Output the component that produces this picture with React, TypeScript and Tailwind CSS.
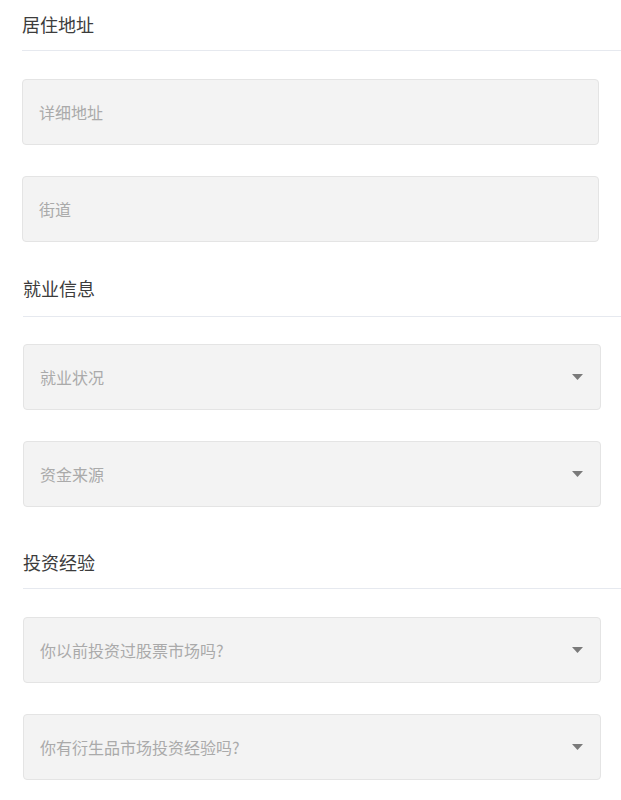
import React from "react";

const font = { fontFamily: '"Noto Sans CJK SC", "Noto Sans", sans-serif' };

function Field({ text, select }: { text: string; select?: boolean }) {
  return (
    <div className="flex h-[66px] items-center justify-between rounded-[4px] border border-[#e4e4e4] bg-[#f3f3f3] pl-[16px] pr-[17px]">
      <span className="text-[16px] leading-6 text-[#aaaaaa]">{text}</span>
      {select && (
        <svg width="11" height="6" viewBox="0 0 11 6" className="shrink-0">
          <path d="M0 0 L11 0 L5.5 6 Z" fill="#7a7a7a" />
        </svg>
      )}
    </div>
  );
}

export default function App() {
  return (
    <div className="min-h-[800px] w-[621px] bg-white" style={font}>
      {/* 居住地址 */}
      <section className="ml-[22px]">
        <h2 className="border-b border-[#e6e9ef] pt-[12px] pb-[14px] text-[18px] font-normal leading-6 text-[#3c3c3c]">
          居住地址
        </h2>
        <div className="mt-[28px] mr-[22px] flex flex-col gap-[31px]">
          <Field text="详细地址" />
          <Field text="街道" />
        </div>
      </section>

      {/* 就业信息 */}
      <section className="ml-[23px] mt-[34px]">
        <h2 className="border-b border-[#e6e9ef] pb-[16px] text-[18px] font-normal leading-6 text-[#3c3c3c]">
          就业信息
        </h2>
        <div className="mt-[27px] mr-[20px] flex flex-col gap-[31px]">
          <Field text="就业状况" select />
          <Field text="资金来源" select />
        </div>
      </section>

      {/* 投资经验 */}
      <section className="ml-[23px] mt-[43px]">
        <h2 className="border-b border-[#e6e9ef] pb-[14px] text-[18px] font-normal leading-6 text-[#3c3c3c]">
          投资经验
        </h2>
        <div className="mt-[28px] mr-[20px] flex flex-col gap-[31px]">
          <Field text="你以前投资过股票市场吗?" select />
          <Field text="你有衍生品市场投资经验吗?" select />
        </div>
      </section>
    </div>
  );
}
